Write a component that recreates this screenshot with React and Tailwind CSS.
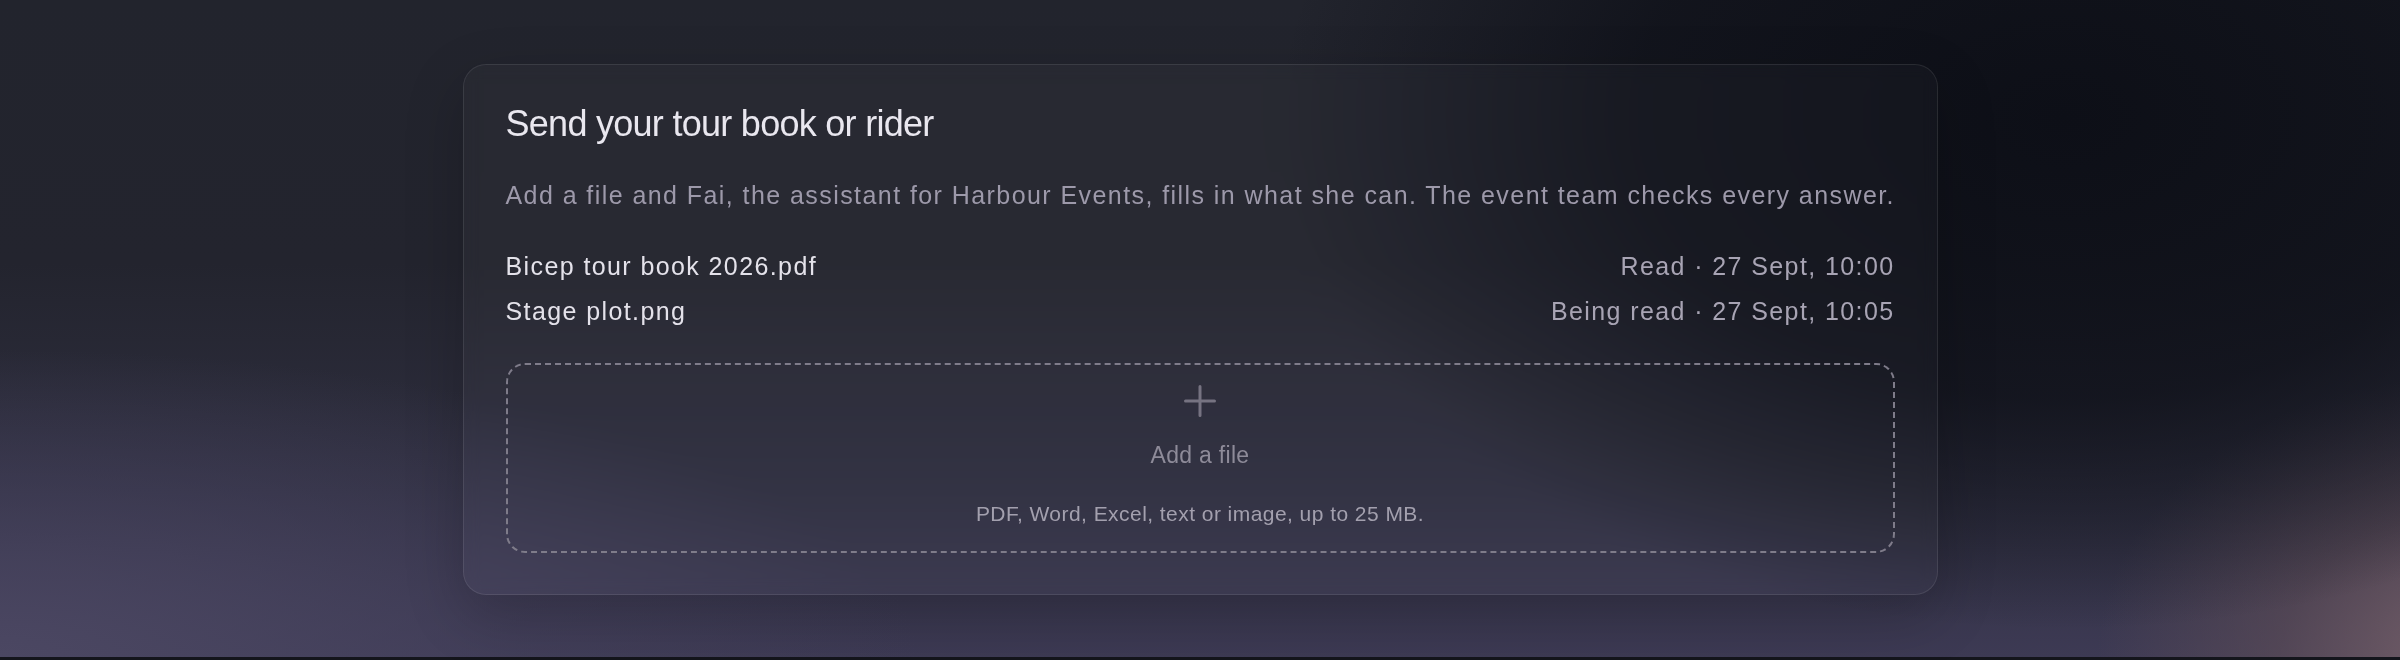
const files = [
    { name: "Bicep tour book 2026.pdf", status: "Read · 27 Sept, 10:00" },
    { name: "Stage plot.png", status: "Being read · 27 Sept, 10:05" },
];

function PlusIcon() {
    return (
        <svg width="32" height="32" viewBox="0 0 32 32" fill="none">
            <path
                d="M16 1.5v29M1.5 16h29"
                stroke="#767381"
                strokeWidth="3"
                strokeLinecap="round"
            />
        </svg>
    );
}

export default function App() {
    return (
        <div className="min-h-[660px] bg-[#14151c] font-['Liberation_Sans',Arial,sans-serif]">
            <div className="h-[657px] pt-[64px] bg-[radial-gradient(ellipse_40%_95%_at_86%_18%,#0d0f17_0%,rgba(13,15,23,0.75)_45%,transparent_82%),radial-gradient(ellipse_20%_55%_at_103%_100%,#75606a_0%,rgba(96,78,88,0.6)_40%,transparent_78%),radial-gradient(ellipse_45%_55%_at_0%_100%,#4b4762_0%,rgba(70,66,94,0.5)_50%,transparent_85%),linear-gradient(180deg,#22242d_0%,#23242e_40%,#2f2f40_75%,#3d3a54_100%)]">
                <div className="mx-auto w-[1475px] rounded-[23px] border border-white/[0.09] bg-white/[0.025] px-[42px] pt-[39px] pb-[41px] shadow-[0_20px_60px_rgba(0,0,0,0.2)] backdrop-blur-sm">
                    <div className="flex flex-col gap-[33px]">
                        <h1 className="text-[36px] leading-[40px] tracking-[-0.02em] text-[#e9e7ef]">
                            Send your tour book or rider
                        </h1>

                        <p className="whitespace-nowrap text-[25px] leading-[37.5px] tracking-[1.43px] text-[#9d99aa]">
                            Add a file and Fai, the assistant for Harbour
                            Events, fills in what she can. The event team
                            checks every answer.
                        </p>

                        <div className="-mb-[1px] flex flex-col gap-[8px]">
                            {files.map((file) => (
                                <div
                                    key={file.name}
                                    className="flex items-center justify-between text-[25px] leading-[37.5px] tracking-[1.4px]"
                                >
                                    <span className="text-[#e4e2ea]">
                                        {file.name}
                                    </span>
                                    <span className="text-[#a8a4b4]">
                                        {file.status}
                                    </span>
                                </div>
                            ))}
                        </div>

                        <div className="flex flex-col items-center rounded-[19px] border-2 border-dashed border-[#7f7c8a] pt-[20.5px] pb-[21.5px]">
                            <PlusIcon />
                            <div className="mt-[21px] text-[23px] leading-[34.5px] tracking-[0.3px] text-[#8e8b99]">
                                Add a file
                            </div>
                            <div className="mt-[25px] text-[21px] leading-[31.5px] tracking-[0.45px] text-[#a3a0ae]">
                                PDF, Word, Excel, text or image, up to 25 MB.
                            </div>
                        </div>
                    </div>
                </div>
            </div>
        </div>
    );
}
